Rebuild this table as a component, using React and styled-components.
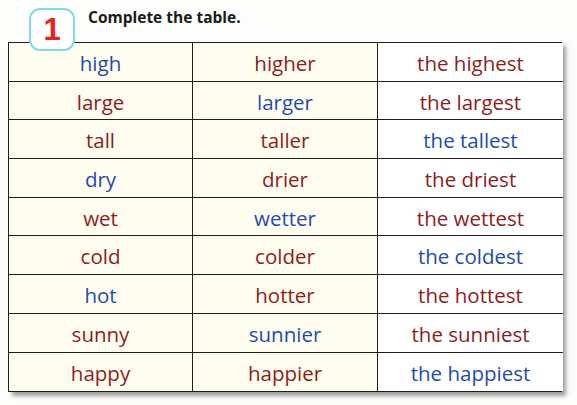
import styled, { createGlobalStyle } from "styled-components";

const GlobalStyle = createGlobalStyle`
  html, body {
    margin: 0;
    padding: 0;
    background: #fdfdfc;
  }
  #root {
    width: 577px;
    height: 405px;
    overflow: hidden;
  }
`;

const BLUE = "#1f4bb0";
const RED = "#8c1d1d";

const rows = [
  [["high", "b"], ["higher", "r"], ["the highest", "r"]],
  [["large", "r"], ["larger", "b"], ["the largest", "r"]],
  [["tall", "r"], ["taller", "r"], ["the tallest", "b"]],
  [["dry", "b"], ["drier", "r"], ["the driest", "r"]],
  [["wet", "r"], ["wetter", "b"], ["the wettest", "r"]],
  [["cold", "r"], ["colder", "r"], ["the coldest", "b"]],
  [["hot", "b"], ["hotter", "r"], ["the hottest", "r"]],
  [["sunny", "r"], ["sunnier", "b"], ["the sunniest", "r"]],
  [["happy", "r"], ["happier", "r"], ["the happiest", "b"]],
];

const App = () => (
  <>
    <GlobalStyle />
    <Page>
      <Header>
        <Badge>1</Badge>
        <Title>Complete the table.</Title>
      </Header>
      <Table>
        {rows.map((row, i) =>
          row.map(([word, tone], j) => (
            <Cell key={`${i}-${j}`} $col={j} $last={i === rows.length - 1} $tone={tone}>
              {word}
            </Cell>
          ))
        )}
      </Table>
    </Page>
  </>
);

export default App;

const Page = styled.div`
  display: flex;
  flex-direction: column;
  padding: 0 15px 0 8px;
`;

const Header = styled.div`
  display: flex;
  align-items: flex-start;
  height: 42px;
  padding-left: 21px;
`;

const Badge = styled.div`
  position: relative;
  z-index: 2;
  box-sizing: border-box;
  width: 46px;
  height: 43px;
  margin-top: 8px;
  border: 2px solid #82d9e6;
  border-radius: 11px;
  background: #ffffff;
  display: flex;
  align-items: center;
  justify-content: center;
  font-family: "Liberation Sans", Arial, sans-serif;
  font-weight: 700;
  font-size: 31px;
  color: #e5241e;
  line-height: 1;
`;

const Title = styled.div`
  margin: 6px 0 0 13px;
  font-family: "Open Sans", "Liberation Sans", sans-serif;
  font-weight: 700;
  font-size: 15.5px;
  color: #1a1a1a;
`;

const Table = styled.div`
  display: grid;
  grid-template-columns: 184px 185px 185px;
  grid-auto-rows: 38.7px;
  width: 554px;
  box-sizing: border-box;
  border: 1.5px solid #1e1e1e;
  box-shadow: 4px 4px 4px rgba(80, 80, 80, 0.55);
`;

const Cell = styled.div`
  display: flex;
  align-items: center;
  justify-content: center;
  box-sizing: border-box;
  border-right: ${(p) => (p.$col < 2 ? "1.5px solid #1e1e1e" : "none")};
  border-bottom: ${(p) => (p.$last ? "none" : "1.5px solid #1e1e1e")};
  background: ${(p) => (p.$col < 2 ? "#fffdf0" : "#ffffff")};
  font-family: "Open Sans", "DejaVu Sans", sans-serif;
  font-size: 20.5px;
  color: ${(p) => (p.$tone === "b" ? BLUE : RED)};
  padding-top: 2px;
`;
